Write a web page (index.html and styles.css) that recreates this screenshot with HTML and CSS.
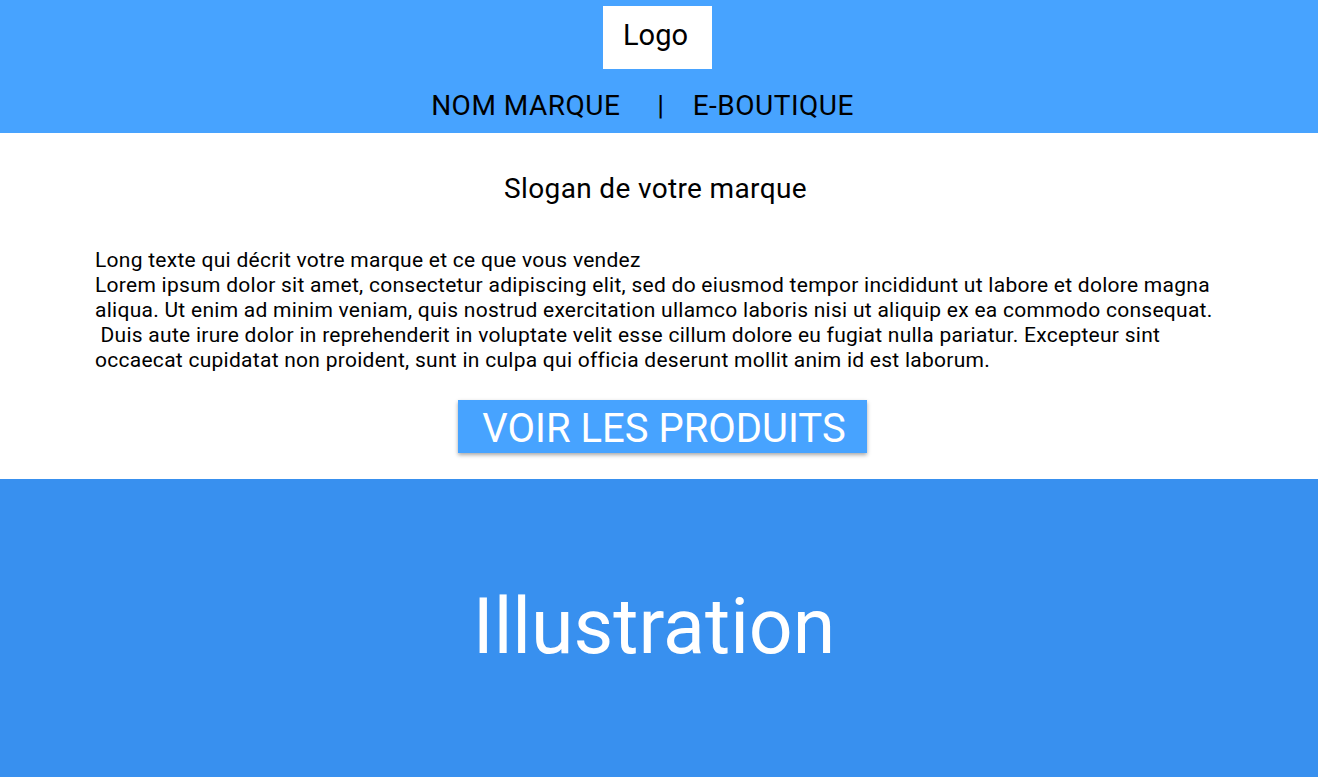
FILE: index.html
```html
<!DOCTYPE html>
<html lang="fr">
<head>
<meta charset="utf-8">
<title>E-boutique</title>
<link rel="stylesheet" href="styles.css">
</head>
<body>
<header class="header">
  <div class="logo">Logo</div>
  <nav class="brand">
    <span>NOM MARQUE</span>
    <span class="sep">|</span>
    <span>E-BOUTIQUE</span>
  </nav>
</header>
<main class="intro">
  <h1 class="slogan">Slogan de votre marque</h1>
  <p class="desc">Long texte qui décrit votre marque et ce que vous vendez<br>Lorem ipsum dolor sit amet, consectetur adipiscing elit, sed do eiusmod tempor incididunt ut labore et dolore magna aliqua. Ut enim ad minim veniam, quis nostrud exercitation ullamco laboris nisi ut aliquip ex ea commodo consequat. &nbsp;Duis aute irure dolor in reprehenderit in voluptate velit esse cillum dolore eu fugiat nulla pariatur. Excepteur sint occaecat cupidatat non proident, sunt in culpa qui officia deserunt mollit anim id est laborum.</p>
  <div class="cta-row"><a class="cta" href="#">VOIR LES PRODUITS</a></div>
</main>
<section class="illustration">Illustration</section>
</body>
</html>
```
FILE: styles.css
```css
html, body {
  margin: 0;
  padding: 0;
}
body {
  font-family: Roboto, "Liberation Sans", sans-serif;
  color: #000;
  background: #fff;
  width: 1318px;
  height: 777px;
  overflow: hidden;
  display: flex;
  flex-direction: column;
}
.header {
  background: #47a3ff;
  height: 133px;
  display: flex;
  flex-direction: column;
  align-items: center;
  padding-top: 6px;
  box-sizing: border-box;
}
.logo {
  background: #fff;
  width: 109px;
  height: 63px;
  margin-right: 4px;
  display: flex;
  align-items: center;
  justify-content: center;
  font-size: 29px;
  line-height: 1;
  padding-bottom: 4px;
  padding-right: 3px;
  box-sizing: border-box;
}
.brand {
  margin-top: 20px;
  display: flex;
  align-items: center;
  font-size: 28px;
  letter-spacing: 0.5px;
  line-height: 34px;
  padding-right: 33px;
}
.brand .sep {
  margin: 0 28px 0 37px;
}
.intro {
  height: 346px;
  display: flex;
  flex-direction: column;
}
.slogan {
  margin: 39px 0 0;
  font-size: 28px;
  letter-spacing: 0.35px;
  font-weight: 400;
  line-height: 34px;
  text-align: center;
  padding-right: 7px;
}
.desc {
  margin: 42px 0 0;
  padding: 0 95px;
  font-size: 21px;
  letter-spacing: 0.27px;
  line-height: 25px;
}
.cta-row {
  display: flex;
  justify-content: center;
  margin-top: 27px;
  padding-left: 7px;
}
.cta {
  display: flex;
  align-items: center;
  justify-content: center;
  width: 409px;
  height: 53px;
  background: #47a3ff;
  color: #fff;
  text-decoration: none;
  font-size: 40px;
  padding-top: 3px;
  padding-left: 3px;
  box-sizing: border-box;
  box-shadow: 0 2px 4px rgba(0, 0, 0, 0.35);
}
.illustration {
  flex: 1;
  background: #3890ef;
  color: #fff;
  font-size: 77px;
  display: flex;
  align-items: center;
  justify-content: center;
  padding-bottom: 2px;
  padding-right: 10px;
}
```
